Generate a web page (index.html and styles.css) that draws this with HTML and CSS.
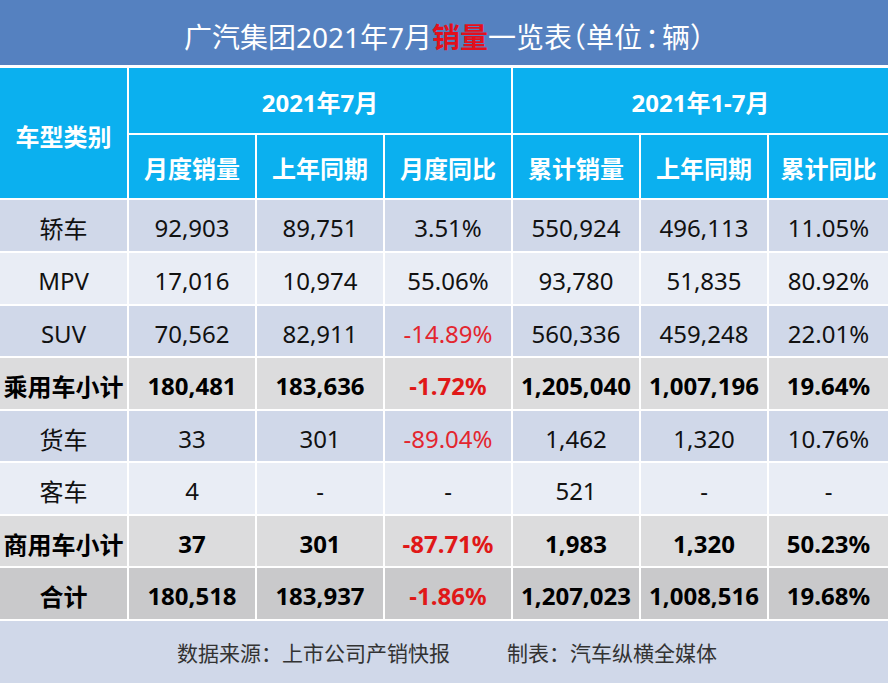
FILE: index.html
```html
<!DOCTYPE html>
<html lang="zh-CN">
<head>
<meta charset="utf-8">
<title>广汽集团2021年7月销量一览表</title>
<link rel="stylesheet" href="styles.css">
</head>
<body>
<div class="sheet">
  <div class="title">广汽集团2021年7月<span class="hot">销量</span>一览表<span class="punct">（</span>单位<span class="punct colon">：</span>辆<span class="punct">）</span></div>
  <div class="grid">
    <div class="cell hd type">车型类别</div>
    <div class="cell hd group">2021年7月</div>
    <div class="cell hd group">2021年1-7月</div>
    <div class="cell hd">月度销量</div>
    <div class="cell hd">上年同期</div>
    <div class="cell hd">月度同比</div>
    <div class="cell hd">累计销量</div>
    <div class="cell hd">上年同期</div>
    <div class="cell hd">累计同比</div>

    <div class="row blue">
      <div class="cell">轿车</div><div class="cell">92,903</div><div class="cell">89,751</div><div class="cell">3.51%</div><div class="cell">550,924</div><div class="cell">496,113</div><div class="cell">11.05%</div>
    </div>
    <div class="row light">
      <div class="cell">MPV</div><div class="cell">17,016</div><div class="cell">10,974</div><div class="cell">55.06%</div><div class="cell">93,780</div><div class="cell">51,835</div><div class="cell">80.92%</div>
    </div>
    <div class="row blue">
      <div class="cell">SUV</div><div class="cell">70,562</div><div class="cell">82,911</div><div class="cell neg">-14.89%</div><div class="cell">560,336</div><div class="cell">459,248</div><div class="cell">22.01%</div>
    </div>
    <div class="row sub">
      <div class="cell">乘用车小计</div><div class="cell">180,481</div><div class="cell">183,636</div><div class="cell neg">-1.72%</div><div class="cell">1,205,040</div><div class="cell">1,007,196</div><div class="cell">19.64%</div>
    </div>
    <div class="row blue">
      <div class="cell">货车</div><div class="cell">33</div><div class="cell">301</div><div class="cell neg">-89.04%</div><div class="cell">1,462</div><div class="cell">1,320</div><div class="cell">10.76%</div>
    </div>
    <div class="row light">
      <div class="cell">客车</div><div class="cell">4</div><div class="cell">-</div><div class="cell">-</div><div class="cell">521</div><div class="cell">-</div><div class="cell">-</div>
    </div>
    <div class="row sub">
      <div class="cell">商用车小计</div><div class="cell">37</div><div class="cell">301</div><div class="cell neg">-87.71%</div><div class="cell">1,983</div><div class="cell">1,320</div><div class="cell">50.23%</div>
    </div>
    <div class="row sub total">
      <div class="cell">合计</div><div class="cell">180,518</div><div class="cell">183,937</div><div class="cell neg">-1.86%</div><div class="cell">1,207,023</div><div class="cell">1,008,516</div><div class="cell">19.68%</div>
    </div>
  </div>
  <div class="footer"><span>数据来源：上市公司产销快报</span><span>制表：汽车纵横全媒体</span></div>
</div>
</body>
</html>
```
FILE: styles.css
```css
html, body {
  margin: 0;
  padding: 0;
  background: #ffffff;
}

.sheet {
  width: 888px;
  height: 683px;
  overflow: hidden;
  font-family: "Noto Sans", "Noto Sans CJK SC", sans-serif;
  color: #111111;
}

.title {
  height: 65px;
  margin-bottom: 3px;
  background: #5581c0;
  color: #ffffff;
  font-size: 28px;
  font-weight: 400;
  display: flex;
  align-items: center;
  justify-content: center;
  padding-top: 6px;
  box-sizing: border-box;
}

.title .hot {
  color: #e3101c;
  font-weight: 700;
}

.title .punct {
  font-feature-settings: "halt";
}

.title .colon {
  padding: 0 3px;
}

.grid {
  display: grid;
  grid-template-columns: 127px 126px 126px 126px 126px 126px 1fr;
  grid-template-rows: 65px 63px 51px 51px 50px 51px 50px 51px 50px 51px;
  gap: 2px;
  background: #ffffff;
}

.row {
  display: contents;
}

.cell {
  display: flex;
  align-items: center;
  justify-content: center;
  font-size: 24px;
  white-space: nowrap;
  padding-top: 4px;
  box-sizing: border-box;
}

.hd {
  background: #0bb0ef;
  color: #ffffff;
  font-weight: 700;
  padding-top: 1px;
}

.hd.type {
  grid-row: span 2;
  padding-top: 4px;
}

.hd.group {
  grid-column: span 3;
}

.blue .cell {
  background: #d0d8e9;
}

.light .cell {
  background: #e9edf5;
}

.sub .cell {
  background: #dcdcdd;
  font-weight: 700;
  color: #000000;
}

.total .cell {
  background: #c9c9cb;
}

.cell.neg {
  color: #e3262f;
}

.sub .cell.neg {
  color: #e01818;
}

.footer {
  margin-top: 2px;
  height: 62px;
  background: #d0d8e9;
  display: flex;
  align-items: center;
  justify-content: center;
  gap: 57px;
  font-size: 21px;
  color: #333333;
  padding-left: 6px;
  box-sizing: border-box;
}
```
